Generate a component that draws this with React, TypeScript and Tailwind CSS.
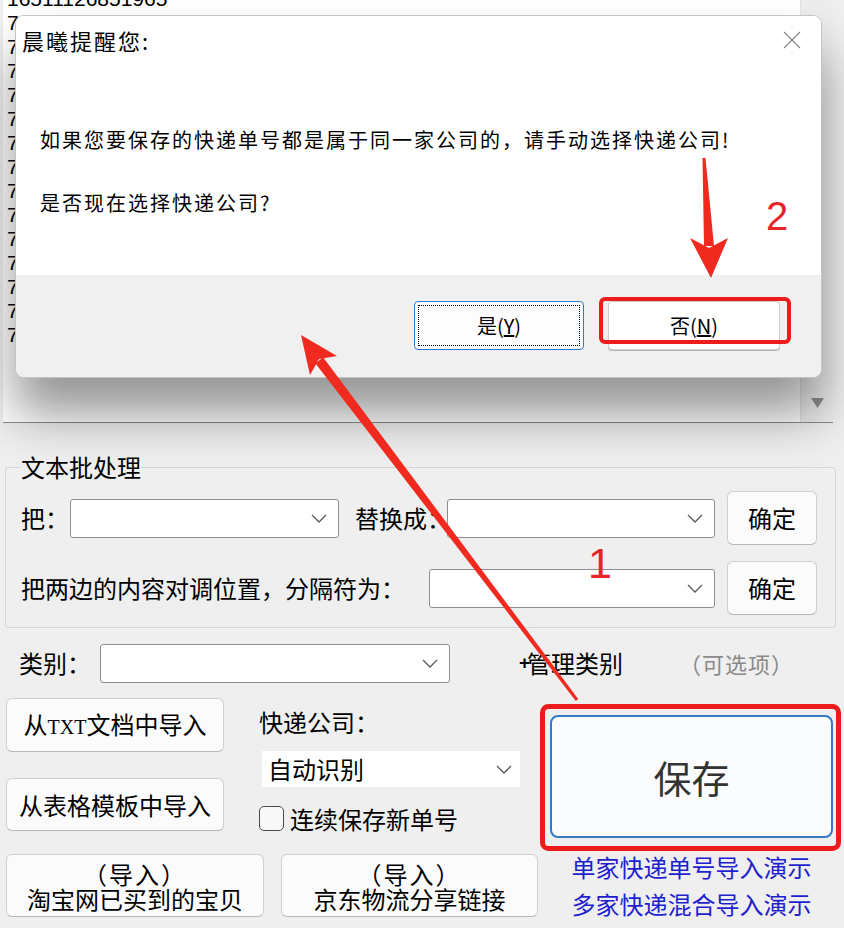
import React from "react";

function Chevron() {
  return (
    <svg width="16" height="9" viewBox="0 0 16 9" className="shrink-0">
      <polyline points="1,1 8,8 15,1" fill="none" stroke="#5a5a5a" strokeWidth="1.3" />
    </svg>
  );
}

function Combo({ className = "" }: { className?: string }) {
  return (
    <div
      className={`flex h-[39px] shrink-0 items-center justify-end rounded-[3px] border border-[#8d8d8d] bg-white pr-[11px] ${className}`}
    >
      <Chevron />
    </div>
  );
}

function Btn({ className = "", children }: { className?: string; children: React.ReactNode }) {
  return (
    <button
      type="button"
      className={`flex shrink-0 flex-col items-center justify-center rounded-[6px] border border-[#cfcfcf] border-b-[#b8b8b8] bg-[#fbfbfb] text-[24px] leading-[24px] text-black ${className}`}
    >
      {children}
    </button>
  );
}

const lines = [
  "16511126851965",
  "73510488623410",
  "73510488623411",
  "73510488623412",
  "73510488623413",
  "73510488623414",
  "73510488623415",
  "73510488623416",
  "73510488623417",
  "73510488623418",
  "73510488623419",
  "73510488623420",
  "73510488623421",
  "73510488623422",
  "73510488623423",
];

export default function App() {
  return (
    <div className="relative h-[928px] w-[844px] overflow-hidden bg-[#efefef] font-['Noto_Sans_CJK_SC','Noto_Sans',sans-serif] text-black">
      {/* text area */}
      <div className="ml-[3px] flex h-[423px] w-[830px] border-b border-[#8c8c8c] bg-white">
        <div className="flex-1 overflow-hidden pl-[4px]">
          <div className="-mt-[13px] font-['Liberation_Sans',sans-serif] text-[21px] leading-[24px]">
            {lines.map((l, i) => (
              <div key={i}>{l}</div>
            ))}
          </div>
        </div>
        <div className="flex w-[33px] flex-col items-center justify-end border-l border-[#e2e2e2] bg-[#ededed] pb-[14px]">
          <svg width="13" height="10" viewBox="0 0 13 10">
            <polygon points="0,0 13,0 6.5,10" fill="#8e8e8e" />
          </svg>
        </div>
      </div>

      {/* batch group */}
      <fieldset className="ml-[5px] mt-[32px] w-[831px] rounded-[3px] border border-[#d6d6d6] px-[15px] pb-[12px] pt-[12px]">
        <legend className="text-[24px] leading-[24px]">文本批处理</legend>
        <div className="flex items-center">
          <span className="w-[49px] shrink-0 text-[24px] leading-[24px]">把：</span>
          <Combo className="w-[269px]" />
          <span className="ml-[16px] w-[92px] shrink-0 whitespace-nowrap text-[24px] leading-[24px]">替换成：</span>
          <Combo className="w-[268px]" />
          <Btn className="ml-[12px] h-[54px] w-[90px]">确定</Btn>
        </div>
        <div className="mt-[16px] flex items-center">
          <span className="w-[408px] shrink-0 whitespace-nowrap text-[24px] leading-[24px]">
            把两边的内容对调位置，分隔符为：
          </span>
          <Combo className="w-[286px]" />
          <Btn className="ml-[12px] h-[54px] w-[90px]">确定</Btn>
        </div>
      </fieldset>

      {/* category row */}
      <div className="mt-[16px] flex h-[38px] items-center">
        <span className="ml-[19px] w-[81px] shrink-0 text-[24px] leading-[24px]">类别：</span>
        <Combo className="h-[38px] w-[350px]" />
        <span className="ml-[69px] flex items-center text-[24px] leading-[24px]">
          <span className="-mr-[1px] w-[9px] font-['Liberation_Sans',sans-serif] text-[19px] font-bold">+</span>
          管理类别
        </span>
        <span className="ml-[56px] whitespace-nowrap text-[22px] leading-[24px] tracking-[1px] text-[#8a8a8a]">（可选项）</span>
      </div>

      {/* bottom area */}
      <div className="mt-[16px] flex">
        <div className="ml-[6px] w-[532px]">
          <div className="flex">
            <div className="flex w-[218px] flex-col">
              <Btn className="h-[54px] w-[218px] text-[22px]">
                <span>
                  从<span className="font-['Liberation_Serif',serif] text-[20px]">TXT</span>文档中导入
                </span>
              </Btn>
              <Btn className="mt-[26px] h-[53px] w-[218px]">从表格模板中导入</Btn>
            </div>
            <div className="ml-[35px] flex w-[262px] flex-col">
              <div className="mt-[12px] text-[24px] leading-[24px]">快递公司：</div>
              <div className="ml-[3px] mt-[17px] flex h-[36px] w-[258px] items-center justify-between bg-white pl-[6px] pr-[8px] text-[24px] leading-[24px]">
                <span>自动识别</span>
                <Chevron />
              </div>
              <div className="mt-[19px] flex h-[25px] items-center">
                <span className="h-[25px] w-[25px] shrink-0 rounded-[5px] border-[1.5px] border-[#4a4a4a] bg-[#f8f8f8]" />
                <span className="ml-[6px] text-[24px] leading-[24px]">连续保存新单号</span>
              </div>
            </div>
          </div>
          <div className="mt-[23px] flex">
            <Btn className="h-[63px] w-[258px] leading-[25px]">
              <span className="tracking-[2px]">（导入）</span>
              <span>淘宝网已买到的宝贝</span>
            </Btn>
            <Btn className="ml-[17px] h-[63px] w-[257px] leading-[25px]">
              <span className="tracking-[2px]">（导入）</span>
              <span>京东物流分享链接</span>
            </Btn>
          </div>
        </div>
        <div className="ml-[12px] w-[283px]">
          <button
            type="button"
            className="mt-[17px] flex h-[123px] w-[283px] items-center justify-center rounded-[8px] border-2 border-[#3479c4] bg-[#fafcfe] text-[38px] leading-[40px] text-[#333]"
          >
            保存
          </button>
          <div className="mt-[10px] text-center text-[24px] leading-[37px] text-[#1f1fd0]">
            <div>单家快递单号导入演示</div>
            <div>多家快递混合导入演示</div>
          </div>
        </div>
      </div>

      {/* dialog */}
      <div className="absolute left-[15px] top-[15px] flex h-[363px] w-[807px] flex-col overflow-hidden rounded-[9px] border border-[#c4c4c4] bg-white shadow-[0_36px_50px_rgba(0,0,0,0.42)]">
        <div className="h-[259px] shrink-0 bg-white pt-[9px]">
          <div className="flex h-[30px] items-center justify-between">
            <span className="pl-[6px] text-[22px] leading-[30px] tracking-[2px]">晨曦提醒您:</span>
            <svg width="18" height="18" viewBox="0 0 18 18" className="mr-[20px]">
              <line x1="1" y1="1" x2="17" y2="17" stroke="#8a8a8a" strokeWidth="1.2" />
              <line x1="17" y1="1" x2="1" y2="17" stroke="#8a8a8a" strokeWidth="1.2" />
            </svg>
          </div>
          <div className="mt-[70px] pl-[24px] text-[20px] leading-[30px] tracking-[2px]">
            如果您要保存的快递单号都是属于同一家公司的，请手动选择快递公司!
          </div>
          <div className="mt-[33px] pl-[24px] text-[20px] leading-[30px] tracking-[2px]">是否现在选择快递公司?</div>
        </div>
        <div className="flex flex-1 justify-end bg-[#f0f0f0] pr-[41px] pt-[26px]">
          <button
            type="button"
            className="flex h-[49px] w-[170px] items-center justify-center rounded-[4px] border border-[#2b7bd1] bg-[#fdfdfd] text-[20px] leading-[24px] outline-[1px] outline-offset-[-5px] outline-black outline-dotted"
          >
            是(<span className="underline">Y</span>)
          </button>
          <button
            type="button"
            className="ml-[24px] flex h-[49px] w-[172px] items-center justify-center rounded-[4px] border border-[#cdcdcd] bg-white text-[20px] leading-[24px] shadow-[0_1px_0_#b5b5b5]"
          >
            否(<span className="underline">N</span>)
          </button>
        </div>
      </div>

      {/* annotations */}
      <svg
        className="pointer-events-none absolute left-0 top-0"
        width="844"
        height="928"
        viewBox="0 0 844 928"
      >
        <rect x="601" y="299" width="188" height="43" rx="4" fill="none" stroke="#ec1c1c" strokeWidth="4" />
        <rect x="542.5" y="706.5" width="296" height="142" rx="6" fill="none" stroke="#ec1c1c" strokeWidth="5" />
        <polygon points="702.5,158 705.5,158 714,246 704,246" fill="#f02a1e" />
        <polygon points="690,238 709,248 728,238 711,278" fill="#f02a1e" />
        <polygon points="578.2,699.1 575.8,700.9 315.5,363.5 323.1,357.3" fill="#f02a1e" />
        <polygon points="301,335 337,356 319,359 310,375" fill="#f02a1e" />
        <text x="777" y="230" fontSize="40" fill="#e8262a" textAnchor="middle" fontFamily="Liberation Sans, sans-serif">
          2
        </text>
        <text x="600" y="578" fontSize="43" fill="#e8262a" textAnchor="middle" fontFamily="Liberation Sans, sans-serif">
          1
        </text>
      </svg>
    </div>
  );
}
